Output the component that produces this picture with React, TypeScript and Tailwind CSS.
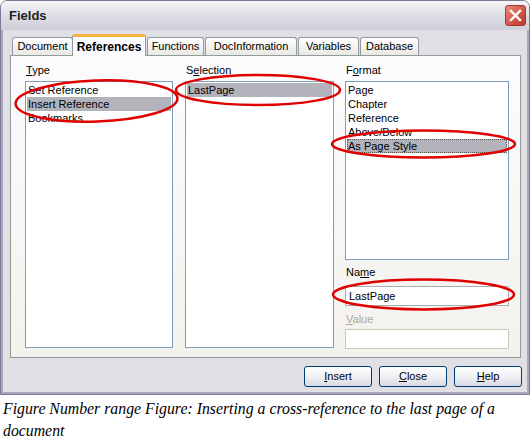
import React from 'react';

const ui = { fontFamily: '"Liberation Sans", Arial, sans-serif' };

function Mn({ pre = '', u, post = '' }: { pre?: string; u: string; post?: string }) {
  return (
    <>
      {pre}
      <span className="underline underline-offset-1">{u}</span>
      {post}
    </>
  );
}

function ListBox({
  items,
  selected,
  focus,
  className,
}: {
  items: string[];
  selected?: number;
  focus?: boolean;
  className: string;
}) {
  return (
    <div className={`bg-white border border-[#7f9db9] pt-px px-px ${className}`}>
      {items.map((it, i) => (
        <div
          key={it}
          className={`h-[14px] leading-[14px] pl-px text-[11px] text-black ${
            i === selected ? 'bg-[#b3b3bc]' : ''
          } ${i === selected && focus ? 'outline outline-1 outline-dotted outline-[#555] -outline-offset-1' : ''}`}
        >
          {it}
        </div>
      ))}
    </div>
  );
}

function Tab({ label, active, className = '' }: { label: string; active?: boolean; className?: string }) {
  if (active) {
    return (
      <div
        className={`relative z-10 -mb-px h-[22px] border border-b-0 border-[#919b9c] rounded-t-[3px] bg-[#fcfcfe] border-t-[3px] border-t-[#f5b544] flex items-center justify-center font-bold text-[12px] ${className}`}
      >
        {label}
      </div>
    );
  }
  return (
    <div
      className={`h-[18px] mt-[3px] border border-b-0 border-[#919b9c] rounded-t-[3px] bg-gradient-to-b from-white to-[#e9e8e3] flex items-center justify-center text-[11px] ${className}`}
    >
      {label}
    </div>
  );
}

function Button({ children, className = '' }: { children: React.ReactNode; className?: string }) {
  return (
    <div
      className={`h-[21px] border border-[#003c74] rounded-[3px] bg-gradient-to-b from-white via-[#f1f1f4] to-[#d9d9e2] flex items-center justify-center text-[11px] ${className}`}
    >
      {children}
    </div>
  );
}

export default function App() {
  return (
    <div className="relative w-[532px] h-[442px] bg-white overflow-hidden text-black" style={ui}>
      <div className="w-[530px] h-[395px] rounded-t-[7px] border border-[#7b7b97] bg-[#e0dfe3] flex flex-col overflow-hidden">
        {/* title bar */}
        <div className="h-[29px] shrink-0 bg-gradient-to-b from-[#f6f6f9] via-[#dedee7] to-[#cfcfdb] flex items-center justify-between pl-[8px] pr-[3px]">
          <span className="font-bold text-[13px] text-[#222]">Fields</span>
          <div className="w-[21px] h-[21px] rounded-[3px] border border-[#a33] bg-gradient-to-br from-[#e98a7a] via-[#d45b4e] to-[#b9382f] flex items-center justify-center">
            <svg width="13" height="13" viewBox="0 0 13 13">
              <path d="M2 2 L11 11 M11 2 L2 11" stroke="white" strokeWidth="2.4" strokeLinecap="square" />
            </svg>
          </div>
        </div>

        {/* body */}
        <div className="flex-1 border-l-[2px] border-r-[2px] border-b-[2px] border-[#a8a8bc] pl-[7px] pr-[5px] pt-[3px]">
          <div className="flex items-end pl-[2px] h-[22px]">
            <Tab label="Document" className="w-[61px]" />
            <Tab label="References" active className="w-[74px] -ml-px" />
            <Tab label="Functions" className="w-[57px] ml-px" />
            <Tab label="DocInformation" className="w-[92px] ml-[1px]" />
            <Tab label="Variables" className="w-[61px] ml-[1px]" />
            <Tab label="Database" className="w-[59px] ml-[1px]" />
          </div>

          <div className="h-[303px] w-[511px] border border-[#919b9c] bg-gradient-to-b from-[#fcfcfe] to-[#f3f2ed] flex pl-[14px] pt-[8px]">
            <div className="flex flex-col w-[148px]">
              <div className="h-[17px] text-[11px] leading-[13px] pl-px">
                <Mn u="T" post="ype" />
              </div>
              <ListBox
                items={['Set Reference', 'Insert Reference', 'Bookmarks']}
                selected={1}
                className="h-[267px]"
              />
            </div>
            <div className="flex flex-col w-[149px] ml-[12px]">
              <div className="h-[17px] text-[11px] leading-[13px] pl-px">
                <Mn pre="S" u="e" post="lection" />
              </div>
              <ListBox items={['LastPage']} selected={0} className="h-[267px]" />
            </div>
            <div className="flex flex-col w-[164px] ml-[11px]">
              <div className="h-[17px] text-[11px] leading-[13px] pl-px">
                <Mn pre="F" u="o" post="rmat" />
              </div>
              <ListBox
                items={['Page', 'Chapter', 'Reference', 'Above/Below', 'As Page Style']}
                selected={4}
                focus
                className="h-[179px]"
              />
              <div className="h-[26px] pt-[6px] text-[11px] leading-[13px] pl-px">
                <Mn pre="Na" u="m" post="e" />
              </div>
              <div className="h-[20px] bg-white border border-[#a5acb2] text-[11px] leading-[18px] pl-[3px]">
                LastPage
              </div>
              <div className="mt-[4px] h-[19px] text-[11px] leading-[19px] pl-px text-[#aca899]">
                <Mn u="V" post="alue" />
              </div>
              <div className="h-[20px] bg-white border border-[#c9c7ba]" />
            </div>
          </div>

          <div className="flex justify-end gap-[7px] mt-[8px]">
            <Button className="w-[68px]">
              <Mn u="I" post="nsert" />
            </Button>
            <Button className="w-[68px]">
              <Mn u="C" post="lose" />
            </Button>
            <Button className="w-[68px]">
              <Mn u="H" post="elp" />
            </Button>
          </div>
        </div>
      </div>

      <p
        className="pl-[3px] pt-[3px] text-[15.8px] leading-[22px] italic text-black"
        style={{ fontFamily: '"Liberation Serif", "Times New Roman", serif' }}
      >
        Figure Number range Figure: Inserting a cross-reference to the last page of a document
      </p>

      {/* red annotation ellipses */}
      <svg className="absolute left-0 top-0 pointer-events-none" width="532" height="442">
        <g fill="none" stroke="#e00000" strokeWidth="2.5">
          <ellipse cx="96.5" cy="101" rx="81" ry="20.5" transform="rotate(-2 96.5 101)" />
          <ellipse cx="258" cy="90" rx="82" ry="15" />
          <ellipse cx="423.5" cy="144" rx="91.5" ry="13.5" />
          <ellipse cx="423.5" cy="294.5" rx="90.5" ry="15" />
        </g>
      </svg>
    </div>
  );
}
